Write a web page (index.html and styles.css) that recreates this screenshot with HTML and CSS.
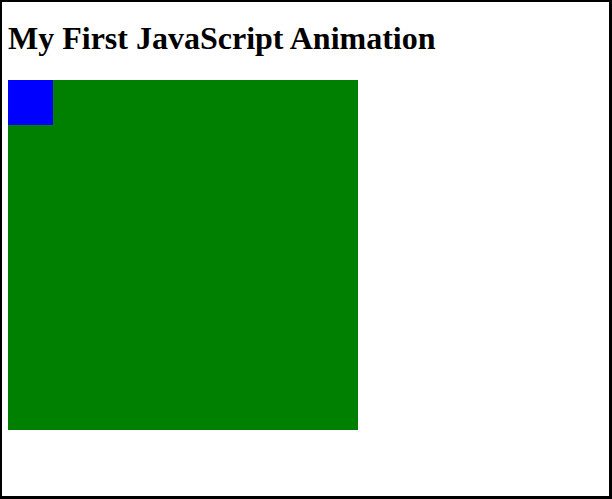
FILE: index.html
```html
<!DOCTYPE html>
<html>
<head>
<meta charset="utf-8">
<link rel="stylesheet" href="styles.css">
</head>
<body>
<div class="frame">
  <h1 class="title">My First JavaScript Animation</h1>
  <div class="container">
    <div class="animate"></div>
  </div>
</div>
</body>
</html>
```

FILE: styles.css
```css
html, body {
  margin: 0;
  padding: 0;
  background: #fff;
}
.frame {
  box-sizing: border-box;
  width: 612px;
  height: 499px;
  border-style: solid;
  border-color: #000;
  border-width: 2px 3px 3px 2px;
  padding: 6px;
  font-family: "Liberation Serif", "Times New Roman", serif;
}
.title {
  font-size: 32px;
  font-weight: bold;
  margin: 12px 0 23px;
  line-height: 37px;
  color: #000;
}
.container {
  width: 350px;
  height: 350px;
  background: #008000;
}
.animate {
  width: 45px;
  height: 45px;
  background: #0000ff;
}
```
